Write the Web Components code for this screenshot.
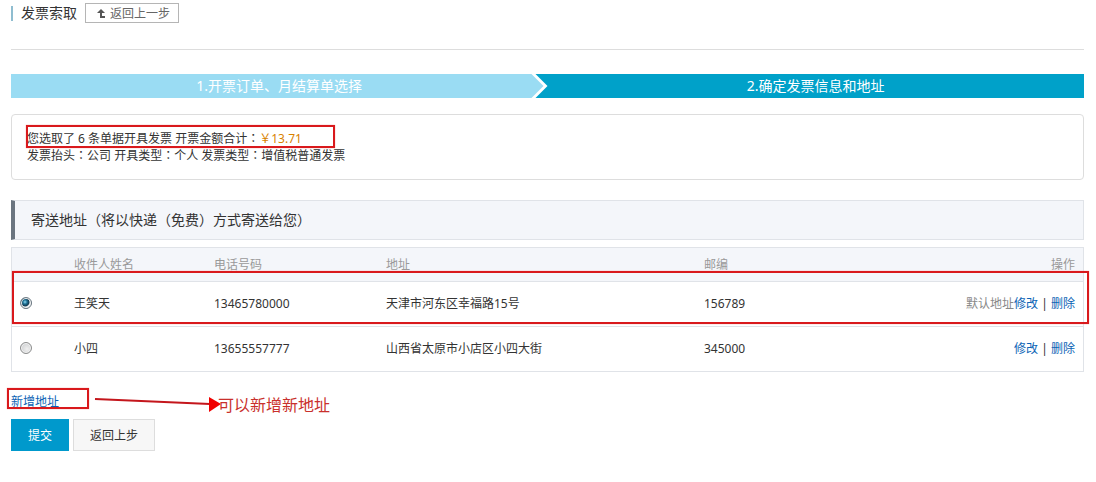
<!DOCTYPE html>
<html lang="zh-CN">
<head>
<meta charset="utf-8">
<title>发票索取</title>
<style>
  body {
    margin: 0;
    padding: 0 12px 24px 11px;
    font: 12px/17px "Noto Sans", "Noto Sans CJK SC", sans-serif;
    color: #333;
    background: #fff;
  }
</style>
</head>
<body>
  <page-header heading="发票索取">返回上一步</page-header>
  <step-bar>
    <span slot="done">1.开票订单、月结算单选择</span>
    <span slot="current">2.确定发票信息和地址</span>
  </step-bar>
  <invoice-summary count="6" total="13.71"></invoice-summary>
  <section-title>寄送地址（将以快递（免费）方式寄送给您）</section-title>
  <address-table></address-table>
  <add-address note="可以新增新地址">新增地址</add-address>
  <form-actions></form-actions>

<script>
  // Small helper: attach an open shadow root and fill it
  function render(el, html) {
    el.attachShadow({ mode: "open" }).innerHTML = html;
  }

  // Red outline that lies over the content it points out
  class MarkBox extends HTMLElement {
    constructor() {
      super();
      render(this, `
        <style>
          :host {
            position: absolute;
            box-sizing: border-box;
            border: 2px solid #d9191c;
            box-shadow: 0 0 1px #f08a8a;
            pointer-events: none;
          }
        </style>`);
    }
  }
  customElements.define("mark-box", MarkBox);

  class PageHeader extends HTMLElement {
    constructor() {
      super();
      render(this, `
        <style>
          :host {
            display: block;
            padding: 3px 0 26px;
            border-bottom: 1px solid #ddd;
          }
          div { display: flex; align-items: center; gap: 8px; }
          h1 {
            display: flex;
            align-items: center;
            gap: 8px;
            margin: 0;
            font-size: 14px;
            line-height: 20px;
            font-weight: normal;
          }
          h1::before {
            content: "";
            width: 2px;
            height: 15px;
            background: #8fbdd0;
          }
          button {
            display: flex;
            align-items: center;
            gap: 5px;
            height: 20px;
            padding: 0 8px 0 11px;
            border: 1px solid #b5b5b5;
            background: #fff;
            color: #666;
            font: inherit;
          }
        </style>
        <div>
          <h1></h1>
          <button type="button">
            <svg width="8" height="9" viewBox="0 0 8 9" fill="#555" aria-hidden="true">
              <path d="M4 0 8 4H5V7H8V9H3V4H0Z"/>
            </svg>
            <slot></slot>
          </button>
        </div>`);
    }

    connectedCallback() {
      this.shadowRoot.querySelector("h1").append(this.getAttribute("heading"));
    }
  }
  customElements.define("page-header", PageHeader);

  class StepBar extends HTMLElement {
    constructor() {
      super();
      render(this, `
        <style>
          :host {
            display: grid;
            grid-template-columns: 1fr 1fr;
            margin-top: 24px;
            background: #00a1c9;
            color: #fff;
            font-size: 14px;
            line-height: 24px;
            text-align: center;
          }
          /* white arrow with the lighter one stacked on top of it */
          .done, .fill {
            clip-path: polygon(0 0, calc(100% - 12px) 0, 100% 50%, calc(100% - 12px) 100%, 0 100%);
          }
          .done {
            display: grid;
            background: #fff;
          }
          .fill {
            grid-area: 1 / 1;
            margin-right: 4px;
            background: #9adcf3;
          }
          ::slotted([slot="done"]) { grid-area: 1 / 1; z-index: 1; }
        </style>
        <div class="done">
          <div class="fill"></div>
          <slot name="done"></slot>
        </div>
        <slot name="current"></slot>`);
    }
  }
  customElements.define("step-bar", StepBar);

  class InvoiceSummary extends HTMLElement {
    constructor() {
      super();
      render(this, `
        <style>
          :host {
            display: block;
            position: relative;
            margin-top: 16px;
            padding: 15px;
            border: 1px solid #ddd;
            border-radius: 4px;
          }
          p { margin: 0; }
          b { font-weight: normal; color: #d98200; }
          /* full-width colon sits in the middle of its box */
          i { font-style: normal; font-family: "Noto Sans CJK TC", sans-serif; line-height: 1; }
          mark-box { left: 14px; top: 10px; width: 309px; height: 23px; }
        </style>
        <p>您选取了 ${this.getAttribute("count")} 条单据开具发票 开票金额合计<i lang="zh-TW">：</i><b>￥${this.getAttribute("total")}</b></p>
        <p>发票抬头<i lang="zh-TW">：</i>公司 开具类型<i lang="zh-TW">：</i>个人 发票类型<i lang="zh-TW">：</i>增值税普通发票</p>
        <mark-box></mark-box>`);
    }
  }
  customElements.define("invoice-summary", InvoiceSummary);

  class SectionTitle extends HTMLElement {
    constructor() {
      super();
      render(this, `
        <style>
          :host {
            display: block;
            margin-top: 20px;
            border: 1px solid #e0e3e8;
            border-left: 4px solid #6b7580;
            background: #f4f6fa;
          }
          h2 {
            margin: 0;
            padding: 0 16px;
            font-size: 14px;
            line-height: 38px;
            font-weight: normal;
          }
        </style>
        <h2><slot></slot></h2>`);
    }
  }
  customElements.define("section-title", SectionTitle);

  const addresses = [
    { name: "王笑天", phone: "13465780000", address: "天津市河东区幸福路15号", zip: "156789", isDefault: true },
    { name: "小四", phone: "13655557777", address: "山西省太原市小店区小四大街", zip: "345000", isDefault: false }
  ];

  class AddressTable extends HTMLElement {
    constructor() {
      super();
      const rows = addresses.map(item => `
        <tr>
          <td><input type="radio" name="address" aria-label="${item.name}"${item.isDefault ? " checked" : ""}></td>
          <td>${item.name}</td>
          <td>${item.phone}</td>
          <td>${item.address}</td>
          <td>${item.zip}</td>
          <td>${item.isDefault ? "<span>默认地址</span>" : ""}<a href="#">修改</a><em>|</em><a href="#">删除</a></td>
        </tr>`).join("");
      render(this, `
        <style>
          :host { display: block; position: relative; margin-top: 7px; }
          table {
            width: 100%;
            table-layout: fixed;
            border-collapse: collapse;
            border: 1px solid #e0e3e8;
          }
          tr { border-bottom: 1px solid #e0e3e8; }
          th, td { padding: 0 8px; text-align: left; font-weight: normal; }
          td { height: 42px; padding-bottom: 2px; }
          th { height: 33px; background: #f4f6fa; color: #999; }
          th:last-child, td:last-child { text-align: right; }
          .pick { width: 38px; }
          .name { width: 124px; }
          .phone { width: 156px; }
          .address { width: 302px; }
          .zip { width: 104px; }
          input {
            appearance: none;
            display: block;
            box-sizing: border-box;
            width: 12px;
            height: 12px;
            margin: 0;
            border: 1px solid #8e8f8f;
            border-radius: 50%;
            background: radial-gradient(circle at 60% 60%, #f0f0f0, #c4c6c8);
            box-shadow: inset 0 0 0 1px #f4f4f4;
          }
          input:checked {
            border-color: #6f7b84;
            background: radial-gradient(circle at 40% 40%, #8fdcf5 0, #1f7296 2px, #12384f 4px, #e8edf0 5px);
          }
          span { color: #888; }
          a { color: #0b63b5; text-decoration: none; }
          em { display: inline-block; width: 13px; text-align: center; font-style: normal; }
          mark-box { left: 1px; right: -5px; top: 24px; height: 53px; }
        </style>
        <table>
          <thead>
            <tr>
              <th class="pick"></th>
              <th class="name">收件人姓名</th>
              <th class="phone">电话号码</th>
              <th class="address">地址</th>
              <th class="zip">邮编</th>
              <th>操作</th>
            </tr>
          </thead>
          <tbody>${rows}</tbody>
        </table>
        <mark-box></mark-box>`);
    }
  }
  customElements.define("address-table", AddressTable);

  class AddAddress extends HTMLElement {
    constructor() {
      super();
      render(this, `
        <style>
          :host { display: block; position: relative; margin-top: 21px; }
          a { color: #0b63b5; text-decoration: none; }
          mark-box { left: -4px; top: -5px; width: 82px; height: 21px; }
          .note {
            position: absolute;
            left: 83px;
            top: 0;
            display: flex;
            align-items: center;
            color: #c9302c;
            font-size: 16px;
            line-height: 24px;
            white-space: nowrap;
          }
          svg { margin-right: -4px; }
        </style>
        <a href="#"><slot></slot></a>
        <mark-box></mark-box>
        <div class="note">
          <svg width="128" height="20" viewBox="0 0 128 20" aria-hidden="true">
            <path d="M1 4 116 9" stroke="#c4161c" stroke-width="2"/>
            <path d="M115 2 127 9 115 17Z" fill="#f00000"/>
          </svg>
          ${this.getAttribute("note")}
        </div>`);
    }
  }
  customElements.define("add-address", AddAddress);

  class FormActions extends HTMLElement {
    constructor() {
      super();
      render(this, `
        <style>
          :host { display: flex; gap: 4px; margin-top: 9px; }
          button {
            height: 32px;
            padding: 0 16px;
            border: 1px solid #ddd;
            background: #f7f7f7;
            color: #333;
            font: inherit;
          }
          .primary { border-color: #0099cc; background: #0099cc; color: #fff; }
        </style>
        <button type="submit" class="primary">提交</button>
        <button type="button">返回上步</button>`);
    }
  }
  customElements.define("form-actions", FormActions);
</script>
</body>
</html>
